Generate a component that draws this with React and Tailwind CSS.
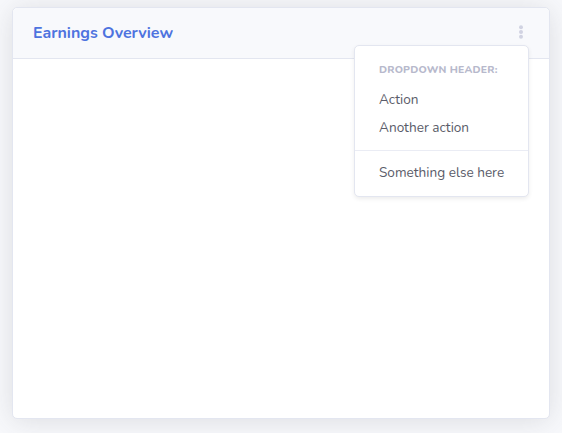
export default function App() {
  const font = { fontFamily: "Nunito, Lato, 'Noto Sans', sans-serif" };
  return (
    <div className="w-[562px] h-[433px] bg-[#f8f9fc] pl-[12px] pt-[7px] overflow-hidden" style={font}>
      <div className="relative w-[538px] h-[412px] bg-white border border-[#e3e6f0] rounded-[5px] shadow-[0_2px_28px_0_rgba(58,59,69,0.15)]">
        {/* Header */}
        <div className="flex items-center justify-between h-[51px] px-5 bg-[#f8f9fc] border-b border-[#e3e6f0] rounded-t-[5px]">
          <h6 className="text-[16px] font-bold text-[#4e73df]">Earnings Overview</h6>
          <svg width="6" height="14" viewBox="0 0 6 14" className="mr-[5px] -mt-[2px]">
            <circle cx="3" cy="2.2" r="2" fill="#d1d3e2" />
            <circle cx="3" cy="7" r="2" fill="#d1d3e2" />
            <circle cx="3" cy="11.8" r="2" fill="#d1d3e2" />
          </svg>
        </div>

        {/* Dropdown */}
        <div className="absolute left-[341px] top-[37px] w-[175px] h-[152px] py-2 bg-white border border-[#e3e6f0] rounded-[5px] shadow-[0_2px_4px_rgba(0,0,0,0.075)] text-[13.6px] text-[#5a5c69] whitespace-nowrap">
          <div className="px-6 py-2 text-[10.4px] leading-[16px] font-extrabold uppercase tracking-[0.02em] text-[#b7b9cc]">
            Dropdown Header:
          </div>
          <div className="px-6 h-[28px] flex items-center">Action</div>
          <div className="px-6 h-[28px] flex items-center">Another action</div>
          <div className="my-2 border-t border-[#eaecf4]" />
          <div className="px-6 h-[28px] flex items-center">Something else here</div>
        </div>
      </div>
    </div>
  );
}
